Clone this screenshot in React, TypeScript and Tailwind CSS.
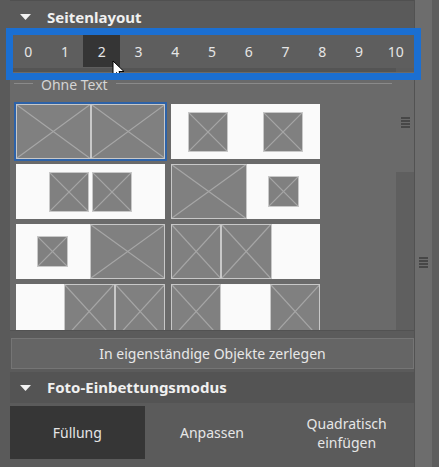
import type { ReactNode } from 'react'

type Part = 'ph' | 'white' | 'sq40' | 'sq31'

// grey placeholder box with the diagonal cross
function Ph({ className = '' }: { className?: string }) {
  return (
    <div className={`relative border border-[#c8c8c8] bg-[#808080] ${className}`}>
      <svg className="absolute inset-0 h-full w-full" preserveAspectRatio="none" viewBox="0 0 100 100">
        <line x1="0" y1="0" x2="100" y2="100" stroke="#a6a6a6" strokeWidth="1.2" vectorEffect="non-scaling-stroke" />
        <line x1="100" y1="0" x2="0" y2="100" stroke="#a6a6a6" strokeWidth="1.2" vectorEffect="non-scaling-stroke" />
      </svg>
    </div>
  )
}

function Cell({ part }: { part: Part }) {
  if (part === 'ph') return <Ph className="h-full flex-1" />
  if (part === 'white') return <div className="h-full flex-1" />
  return (
    <div className="flex h-full flex-1 items-center justify-center">
      <Ph className={part === 'sq40' ? 'h-[40px] w-[40px]' : 'h-[31px] w-[31px]'} />
    </div>
  )
}

function Thumb({ parts, selected, children }: { parts?: Part[]; selected?: boolean; children?: ReactNode }) {
  return (
    <div className={`flex h-[55px] w-[149px] bg-[#fafafa] ${selected ? 'outline-2 outline-[#2d62a8]' : ''}`}>
      {children ?? parts!.map((p, i) => <Cell key={i} part={p} />)}
    </div>
  )
}

function Grip() {
  return (
    <div className="flex w-[9px] flex-col gap-[1px]">
      {[0, 1, 2, 3].map((i) => (
        <div key={i} className="h-[2px] bg-[#474747]" />
      ))}
    </div>
  )
}

function Caret() {
  return (
    <svg width="11" height="6" viewBox="0 0 11 6" className="shrink-0">
      <path d="M0 0 H11 L5.5 6 Z" fill="#f2f2f2" />
    </svg>
  )
}

const numbers = ['0', '1', '2', '3', '4', '5', '6', '7', '8', '9', '10']

export default function App() {
  return (
    <div className="relative flex h-[467px] w-[439px] overflow-hidden bg-[#5b5b5b] font-['Noto_Sans',sans-serif] text-[14px] text-[#e6e6e6]">
      <div className="w-[10px] shrink-0 bg-[#5a5a5a]" />

      <div className="flex w-[404px] shrink-0 flex-col">
        {/* Seitenlayout header */}
        <div className="flex h-[33px] shrink-0 items-center gap-[16px] border-t border-[#505050] bg-[#5a5a5a] pl-[10px]">
          <Caret />
          <span className="text-[15px] font-bold text-[#f0f0f0]">Seitenlayout</span>
        </div>

        {/* column count strip */}
        <div className="flex h-[39px] shrink-0 flex-col bg-[#5e5e5e] pt-[2px]">
          <div className="flex h-[32px]">
            {numbers.map((n) => (
              <div key={n} className={`flex flex-1 items-center justify-center ${n === '2' ? 'bg-[#353535]' : ''}`}>
                {n}
              </div>
            ))}
          </div>
          <div className="mt-[1px] flex h-[4px]">
            <div className="flex-1 bg-[#545454]" />
            <div className="w-[18px] bg-[#5c5c5c]" />
          </div>
        </div>

        {/* layout list */}
        <div className="flex h-[258px] shrink-0 bg-[#6a6a6a]">
          <div className="flex flex-1 flex-col overflow-hidden">
            <div className="mt-[1px] flex h-[20px] shrink-0 items-center px-[4px]">
              <div className="h-px w-[19px] bg-[#8a8a8a]" />
              <span className="mx-[8px] pt-[4px] leading-none text-[#d4d4d4]">Ohne Text</span>
              <div className="h-px flex-1 bg-[#8a8a8a]" />
            </div>
            <div className="mt-[11px] grid shrink-0 grid-cols-[149px_149px] gap-x-[6px] gap-y-[5px] pl-[6px]">
              <Thumb parts={['ph', 'ph']} selected />
              <Thumb parts={['sq40', 'sq40']} />
              <Thumb>
                <div className="flex flex-1 items-center justify-center gap-[3px]">
                  <Ph className="h-[40px] w-[40px]" />
                  <Ph className="h-[40px] w-[40px]" />
                </div>
              </Thumb>
              <Thumb parts={['ph', 'sq31']} />
              <Thumb parts={['sq31', 'ph']} />
              <Thumb parts={['ph', 'ph', 'white']} />
              <Thumb parts={['white', 'ph', 'ph']} />
              <Thumb parts={['ph', 'white', 'ph']} />
            </div>
          </div>
          <div className="flex w-[18px] flex-col bg-[#5f5f5f]">
            <div className="flex h-[100px] items-center justify-center bg-[#6a6a6a]">
              <Grip />
            </div>
          </div>
        </div>

        {/* bottom section */}
        <div className="flex flex-1 flex-col border-t border-[#525252] bg-[#5b5b5b] pt-[7px]">
          <button className="ml-[1px] flex h-[31px] shrink-0 items-center justify-center border border-[#757575] bg-[#656565] text-[#e8e8e8]">
            In eigenständige Objekte zerlegen
          </button>
          <div className="mt-[3px] flex h-[31px] shrink-0 items-center gap-[16px] bg-[#545454] pl-[10px]">
            <Caret />
            <span className="text-[15px] font-bold text-[#f0f0f0]">Foto-Einbettungsmodus</span>
          </div>
          <div className="mt-[3px] flex h-[53px] shrink-0">
            <div className="flex flex-1 items-center justify-center bg-[#363636]">Füllung</div>
            <div className="flex flex-1 items-center justify-center">Anpassen</div>
            <div className="flex flex-1 items-center justify-center text-center leading-[19px]">
              Quadratisch
              <br />
              einfügen
            </div>
          </div>
        </div>
      </div>

      {/* outer scrollbar */}
      <div className="flex w-[18px] shrink-0 justify-center border-l border-[#525252] bg-[#6d6d6d] pt-[257px]">
        <Grip />
      </div>
      <div className="w-[7px] shrink-0 bg-[#5e5e5e]" />

      {/* mouse pointer */}
      <svg className="absolute left-[112px] top-[60px]" width="14" height="20" viewBox="0 0 14 20">
        <path d="M1 1 L1 16 L4.5 12.5 L7 18.5 L9.5 17.5 L7 11.5 L12 11.5 Z" fill="#fff" stroke="#000" strokeWidth="1" />
      </svg>

      {/* highlight frame */}
      <div className="absolute left-[6px] top-[28px] h-[52px] w-[415px] border-[7px] border-[#1b6fd2]" />
    </div>
  )
}
